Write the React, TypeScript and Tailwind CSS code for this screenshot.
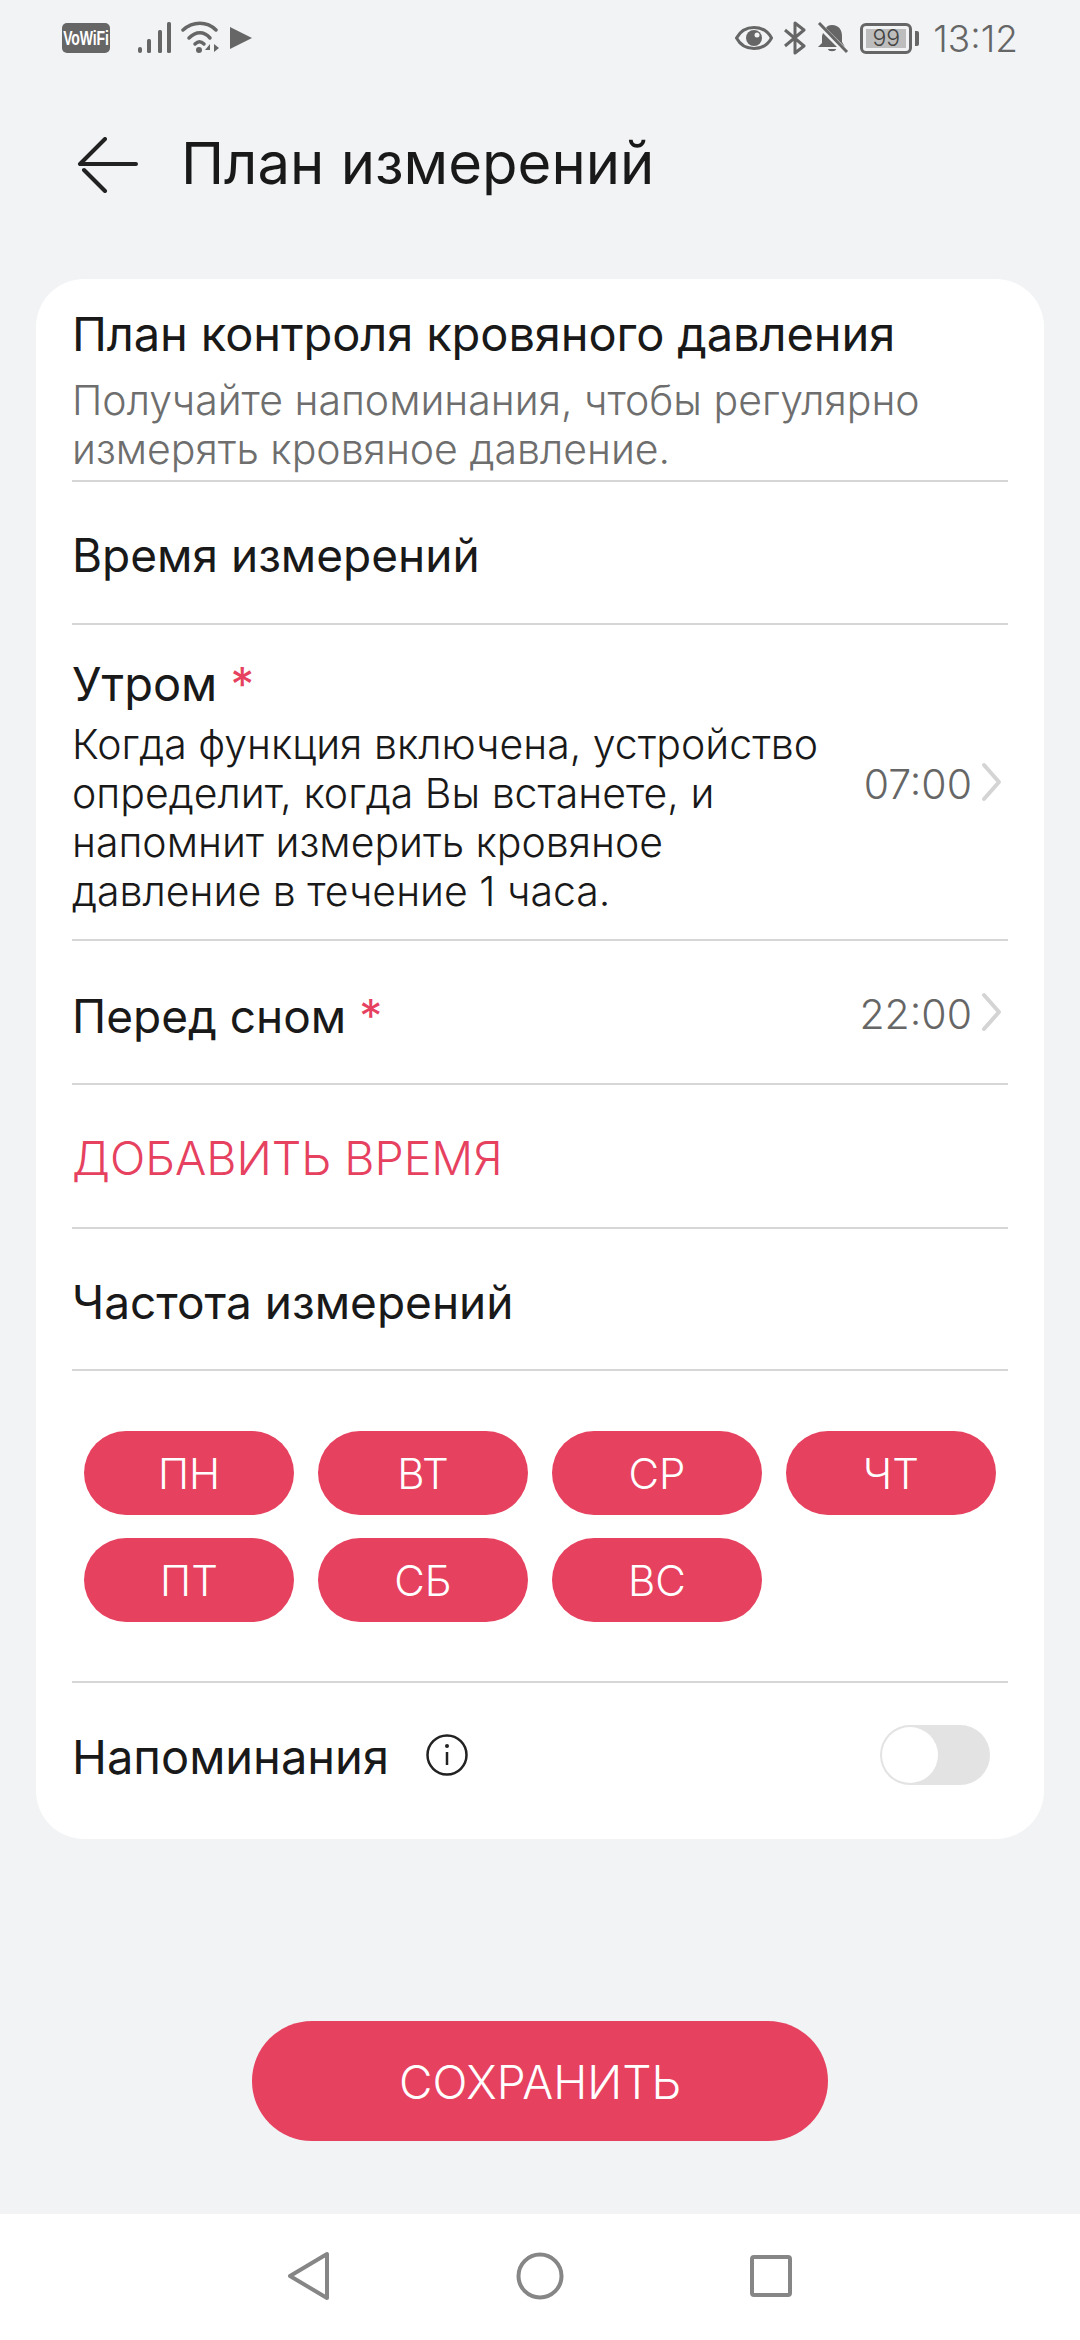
import React from 'react';

const days = ['ПН', 'ВТ', 'СР', 'ЧТ', 'ПТ', 'СБ', 'ВС'];

function StatusLeft() {
  return (
    <div className="flex items-center">
      <div className="w-[48px] h-[30px] rounded-[5px] bg-[#666] flex items-center justify-center text-white text-[14px] font-bold font-['Liberation_Sans',sans-serif] ml-[62px]">
        <span className="scale-y-[1.5] tracking-[-0.1px]">VoWiFi</span>
      </div>
      <svg width="34" height="32" viewBox="0 0 34 32" className="ml-[28px]" fill="#666">
        <rect x="0" y="25" width="4" height="6" rx="2" />
        <rect x="9" y="17" width="4" height="14" rx="1.5" />
        <rect x="20" y="8" width="4" height="23" rx="1.5" />
        <rect x="29" y="0" width="4" height="31" rx="1.5" />
      </svg>
      <svg width="40" height="34" viewBox="0 0 40 34" className="ml-[9px]" fill="none" stroke="#666" strokeWidth="3.5" strokeLinecap="round">
        <path d="M2 9 C12 0 26 0 35 9" />
        <path d="M8 17 C15 10 23 10 29 17" />
        <path d="M14 23 C17 20 20 20 23 23" />
        <circle cx="18" cy="29" r="3" fill="#666" stroke="none" />
        <path d="M29 23 L24 29 H29 Z M33 23 V31 L38 27 Z" fill="#666" stroke="none" />
      </svg>
      <svg width="24" height="24" viewBox="0 0 24 24" className="ml-[8px]" fill="#666">
        <path d="M1 1 L23 12 L1 23 Z" />
      </svg>
    </div>
  );
}

function StatusRight() {
  return (
    <div className="flex items-center mr-[62px] text-[#666]">
      <svg width="38" height="26" viewBox="0 0 38 26" fill="none">
        <path d="M1.5 13 C9 -1 29 -1 36.5 13 C29 27 9 27 1.5 13 Z" stroke="#666" strokeWidth="3" />
        <circle cx="19" cy="13" r="8" fill="#666" />
        <circle cx="22" cy="10" r="2.5" fill="#f1f3f5" />
      </svg>
      <svg width="26" height="34" viewBox="0 0 26 34" className="ml-[10px]" fill="none" stroke="#666" strokeWidth="3" strokeLinejoin="round">
        <path d="M2 9 L21 25 L12 32 V2 L21 9 L2 25" />
      </svg>
      <svg width="32" height="32" viewBox="0 0 32 32" className="ml-[8px]" fill="#666">
        <path d="M15 3 C22 3 25 8 25 14 V20 L28 25 L9 6 C10 4 12 3 15 3 Z" />
        <path d="M6 11 L20 25 H1 L5 21 V14 Z" />
        <path d="M11 27 H19 C19 30 11 30 11 27 Z" />
        <path d="M2 1 L30 30" stroke="#666" strokeWidth="3" />
      </svg>
      <div className="ml-[11px] w-[52px] h-[31px] rounded-[6px] border-[3px] border-[#666] p-[3px] flex">
        <div className="flex-1 bg-[#bdbdbd] flex items-center justify-center text-[23px] leading-none font-light text-[#444] font-['Inter',sans-serif]">
          99
        </div>
      </div>
      <div className="ml-[3px] w-[4px] h-[15px] rounded-r-[2px] bg-[#666]" />
      <span className="ml-[14px] text-[37px] leading-none font-light font-['Inter',sans-serif]">13:12</span>
    </div>
  );
}

function Row({ children, className = '' }: { children: React.ReactNode; className?: string }) {
  return <div className={`mx-[36px] border-b-2 border-[#d6d6d6] flex items-center ${className}`}>{children}</div>;
}

function Time({ value }: { value: string }) {
  return (
    <div className="flex items-center ml-auto">
      <span className="text-[41px] font-light text-[#666] pt-[5px]">{value}</span>
      <svg width="24" height="42" viewBox="0 0 24 42" className="ml-[7px] mr-[5px]" fill="none" stroke="#d4d4d4" strokeWidth="4" strokeLinecap="round" strokeLinejoin="round">
        <path d="M5 4 L20 21 L5 38" />
      </svg>
    </div>
  );
}

export default function App() {
  return (
    <div className="w-[1080px] h-[2340px] bg-[#f1f3f5] flex flex-col font-['Inter',sans-serif] text-[#191919]">
      <div className="h-[75px] flex items-center justify-between pt-[1px]">
        <StatusLeft />
        <StatusRight />
      </div>

      <div className="h-[204px] flex items-center pb-[24px]">
        <svg width="62" height="56" viewBox="0 0 62 56" className="ml-[77px]" fill="none" stroke="#222" strokeWidth="4" strokeLinecap="round" strokeLinejoin="round">
          <path d="M28 2 L3 27 H59" />
          <path d="M7 33 L28 54" />
        </svg>
        <h1 className="ml-[42px] text-[58px] font-normal leading-none -mt-[5px]">План измерений</h1>
      </div>

      <div className="mx-[36px] h-[1560px] bg-white rounded-[48px] flex flex-col">
        <Row className="h-[203px] !block pt-[25px]">
          <div className="text-[47px] tracking-[-0.1px] leading-[60px]">План контроля кровяного давления</div>
          <div className="text-[41px] leading-[49px] font-light text-[#6e6e6e] mt-[12px]">
            Получайте напоминания, чтобы регулярно
            <br />
            измерять кровяное давление.
          </div>
        </Row>
        <Row className="h-[143px] text-[46px] pt-[6px]">Время измерений</Row>
        <Row className="h-[316px]">
          <div className="pt-[6px]">
            <div className="text-[47px] leading-[60px]">
              Утром <span className="text-[#e6415f]">*</span>
            </div>
            <div className="text-[41px] leading-[49px] mt-[6px] font-light">
              Когда функция включена, устройство
              <br />
              определит, когда Вы встанете, и
              <br />
              напомнит измерить кровяное
              <br />
              давление в течение 1 часа.
            </div>
          </div>
          <Time value="07:00" />
        </Row>
        <Row className="h-[144px] text-[46px]">
          <span className="pt-[8px]">
            Перед сном <span className="text-[#e6415f]">*</span>
          </span>
          <Time value="22:00" />
        </Row>
        <Row className="h-[144px] text-[46.5px] font-light text-[#e6415f] pt-[5px]">ДОБАВИТЬ ВРЕМЯ</Row>
        <Row className="h-[142px] text-[46px] pt-[7px]">Частота измерений</Row>
        <Row className="h-[312px]">
          <div className="grid grid-cols-4 gap-x-[24px] gap-y-[23px] w-full px-[12px]">
            {days.map((d) => (
              <div key={d} className="h-[84px] rounded-[42px] bg-[#e6415f] text-white text-[42px] font-light flex items-center justify-center pt-[2px]">
                {d}
              </div>
            ))}
          </div>
        </Row>
        <div className="mx-[36px] flex-1 flex items-center pb-[12px]">
          <span className="text-[47px] pt-[4px]">Напоминания</span>
          <svg width="42" height="42" viewBox="0 0 42 42" className="ml-[37px]" fill="none" stroke="#222" strokeWidth="2.5">
            <circle cx="21" cy="21" r="19.5" />
            <path d="M21 18 V31" />
            <circle cx="21" cy="12" r="2" fill="#222" stroke="none" />
          </svg>
          <div className="ml-auto mr-[18px] w-[110px] h-[60px] rounded-full bg-[#e3e3e3] p-[2px]">
            <div className="w-[56px] h-[56px] rounded-full bg-white" />
          </div>
        </div>
      </div>

      <div className="flex-1 flex items-end justify-center pb-[73px]">
        <div className="w-[576px] h-[120px] rounded-[60px] bg-[#e6415f] text-white text-[46px] font-light flex items-center justify-center pt-[2px]">
          СОХРАНИТЬ
        </div>
      </div>

      <div className="h-[126px] bg-white flex items-center pb-[2px]">
        <svg width="44" height="50" viewBox="0 0 44 50" className="ml-[287px]" fill="none" stroke="#868686" strokeWidth="4" strokeLinejoin="round">
          <path d="M40 3 V47 L3 25 Z" />
        </svg>
        <svg width="48" height="48" viewBox="0 0 48 48" className="ml-[185px]" fill="none" stroke="#868686" strokeWidth="4">
          <circle cx="24" cy="24" r="21.5" />
        </svg>
        <svg width="44" height="44" viewBox="0 0 44 44" className="ml-[185px]" fill="none" stroke="#868686" strokeWidth="4" strokeLinejoin="round">
          <rect x="3" y="3" width="38" height="38" rx="2" />
        </svg>
      </div>
    </div>
  );
}
